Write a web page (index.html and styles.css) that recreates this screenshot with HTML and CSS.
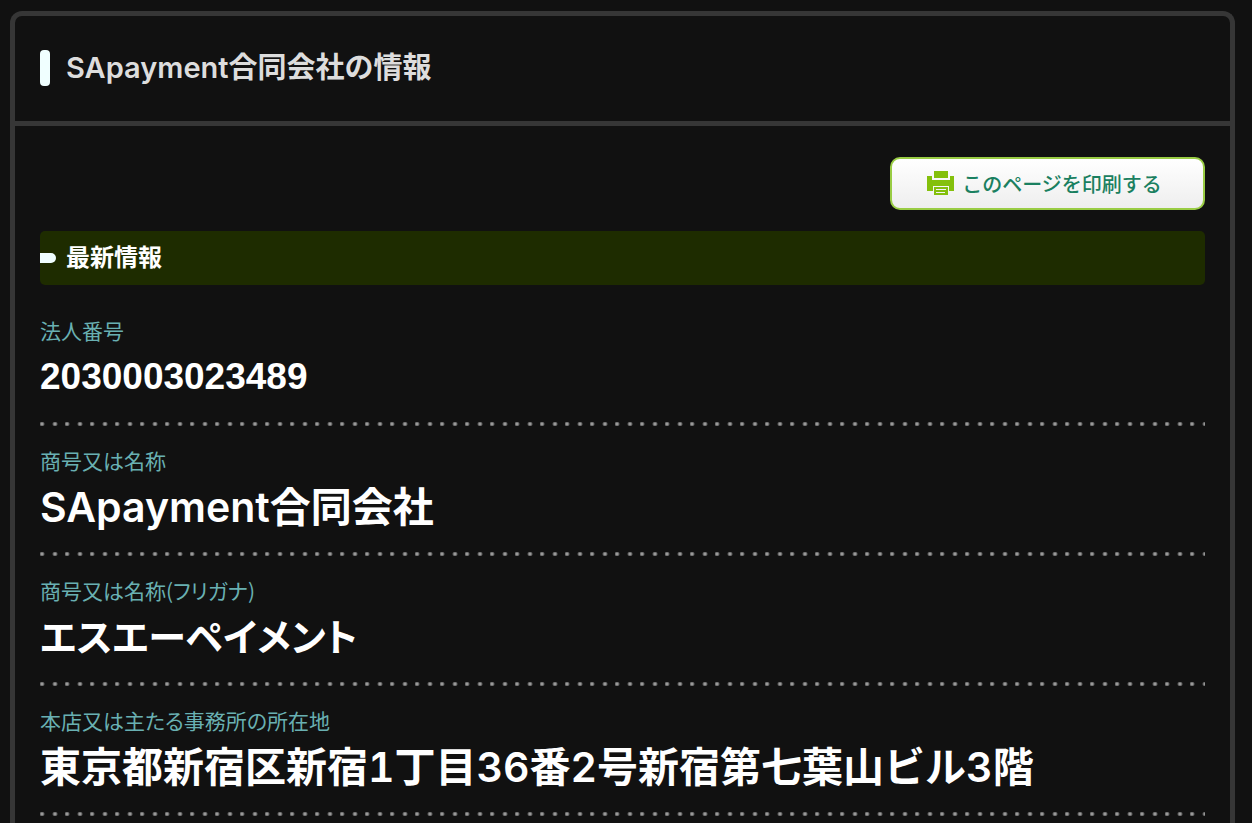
FILE: index.html
```
<!DOCTYPE html>
<html lang="ja">
<head>
    <meta charset="UTF-8">
    <meta name="viewport" content="width=device-width, initial-scale=1.0">
    <title>SApayment合同会社の情報</title>
    <link rel="stylesheet" href="styles.css">
</head>
<body>
    <main class="panel">
        <header class="panel-header">
            <h1>SApayment合同会社の情報</h1>
        </header>
        <div class="panel-body">
            <div class="tools">
                <button type="button" class="print-button" id="printButton">
                    <svg class="print-icon" viewBox="0 0 27 25" aria-hidden="true">
                        <path d="M7 0h14v7H7z"/>
                        <path d="M0 5h5v4h18V5h4v15h-5v-5H6v5H0z"/>
                        <path fill-rule="evenodd" d="M7 16h14v8H7zM9 18v1h10v-1zM9 21v1h9v-1z"/>
                    </svg>
                    <span>このページを印刷する</span>
                </button>
            </div>

            <h2>最新情報</h2>

            <dl class="info">
                <div class="row">
                    <dt>法人番号</dt>
                    <dd class="number">2030003023489</dd>
                </div>
                <div class="row">
                    <dt>商号又は名称</dt>
                    <dd>SApayment合同会社</dd>
                </div>
                <div class="row">
                    <dt>商号又は名称(フリガナ)</dt>
                    <dd class="kana">エスエーペイメント</dd>
                </div>
                <div class="row">
                    <dt>本店又は主たる事務所の所在地</dt>
                    <dd class="address">東京都新宿区新宿1丁目36番2号新宿第七葉山ビル3階</dd>
                </div>
            </dl>
        </div>
    </main>

    <script>
        document.getElementById("printButton").addEventListener("click", () => {
            window.print();
        });
    </script>
</body>
</html>
```
FILE: styles.css
```
* {
    box-sizing: border-box;
}
body {
    margin: 0;
    padding: 11px 17px 0 10px;
    min-height: 100vh;
    display: flex;
    background-color: #111;
    color: #fff;
    font-family: Inter, "Noto Sans CJK JP", sans-serif;
}
.panel {
    flex: 1;
    min-width: 0;
    border: 5px solid #363636;
    border-bottom: 0;
    border-radius: 12px 12px 0 0;
}
.panel-header {
    padding: 34px 25px 35px;
    border-bottom: 5px solid #363636;
}
h1 {
    display: flex;
    align-items: center;
    gap: 16px;
    margin: 0;
    font-size: 29px;
    font-weight: 600;
    line-height: 36px;
    color: #ddd;
}
h1::before {
    content: "";
    width: 10px;
    height: 36px;
    border-radius: 4px;
    background-color: #f0ffff;
}
.panel-body {
    padding: 31px 25px 0;
}
.tools {
    display: flex;
    justify-content: flex-end;
    margin-bottom: 21px;
}
.print-button {
    display: flex;
    align-items: center;
    justify-content: center;
    gap: 8px;
    width: 315px;
    height: 53px;
    padding: 0 6px 0 0;
    border: 2px solid #9c4;
    border-radius: 10px;
    background: linear-gradient(#fff, #eee);
    color: #1a8060;
    font-family: "Noto Sans CJK JP", sans-serif;
    font-size: 20px;
    font-weight: 500;
    cursor: pointer;
}
.print-icon {
    width: 27px;
    height: 25px;
    fill: #84c00c;
}
h2 {
    display: flex;
    align-items: center;
    gap: 10px;
    margin: 0 0 11px;
    border-radius: 5px;
    background-color: #1e2c00;
    font-size: 24px;
    font-weight: 700;
    line-height: 54px;
}
h2::before {
    content: "";
    width: 16px;
    height: 10px;
    border-radius: 0 5px 5px 0;
    background-color: #f0ffff;
}
.info {
    margin: 0;
    font-feature-settings: "palt";
}
.row {
    padding: 22px 0 23px;
    /* two dots per tile */
    background-image:
        radial-gradient(circle at 2px 2px, #999 1px, transparent 3px),
        radial-gradient(circle at 15px 2px, #999 1px, transparent 3px);
    background-size: 25px 4px;
    background-position: left bottom;
    background-repeat: repeat-x;
}
dt {
    margin-bottom: 9px;
    color: #69b0b2;
    font-family: "Noto Sans CJK JP", sans-serif;
    font-size: 21px;
    font-weight: 400;
    line-height: 24px;
}
dd {
    margin: 0;
    font-size: 41px;
    font-weight: 600;
    line-height: 52px;
}
.number {
    font-family: "Liberation Sans", Arial, sans-serif;
    font-size: 37px;
    font-weight: 700;
}
.kana {
    font-size: 38px;
}
.address {
    font-feature-settings: "tnum";
}
```
